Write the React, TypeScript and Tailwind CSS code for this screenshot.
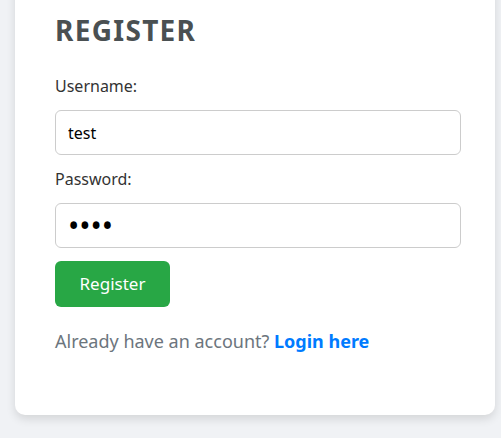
export default function App() {
  return (
    <div className="min-h-[438px] bg-[#f0f2f5] pb-6 pl-[15px] pr-[6px] font-['Noto_Sans',sans-serif]">
      <div className="mt-[-30px] rounded-[10px] bg-white px-10 pb-[60px] pt-[46px] shadow-[0_4px_10px_rgba(0,0,0,0.12)]">
        <h2 className="text-[28px] font-bold leading-none tracking-[1.3px] text-[#4a5052]">REGISTER</h2>
        <form className="mt-[30px]" onSubmit={e => e.preventDefault()}>
          <label className="block text-[16px] leading-6 text-[#333]">Username:</label>
          <input
            type="text"
            defaultValue="test"
            className="mt-[12px] block h-[45px] w-[406px] rounded-[6px] border border-[#ccc] px-3 text-[16px] text-black outline-none"
          />
          <label className="mt-[12px] block text-[16px] leading-6 text-[#333]">Password:</label>
          <input
            type="password"
            defaultValue="test"
            className="mt-[12px] block h-[45px] w-[406px] rounded-[6px] border border-[#ccc] px-3 text-[30px] text-black outline-none"
          />
          <button className="mt-[13px] block h-[46px] w-[115px] rounded-[6px] bg-[#28a745] text-[17px] text-white">
            Register
          </button>
        </form>
        <p className="mt-[20px] text-[18px] leading-7 text-[#6c757d]">
          Already have an account? <a href="#" className="font-bold text-[#007bff]">Login here</a>
        </p>
      </div>
    </div>
  )
}
